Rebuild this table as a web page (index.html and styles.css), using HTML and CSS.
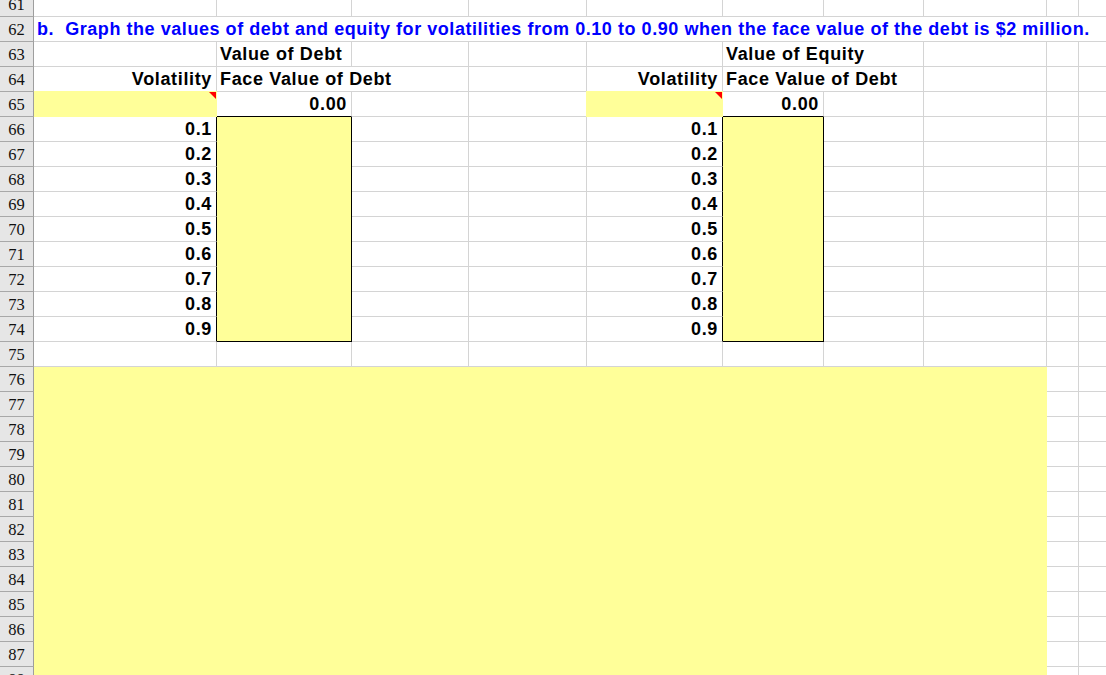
FILE: index.html
```html
<!DOCTYPE html>
<html>
<head>
<meta charset="utf-8">
<link rel="stylesheet" href="styles.css">
</head>
<body>
<div class="sheet">
  <!-- 61 -->
  <div class="rh">61</div><div class="c"></div><div class="c"></div><div class="c"></div><div class="c"></div><div class="c"></div><div class="c"></div><div class="c"></div><div class="c"></div><div class="c"></div><div class="c"></div>
  <!-- 62 -->
  <div class="rh">62</div><div class="c title span10">b.&nbsp; Graph the values of debt and equity for volatilities from 0.10 to 0.90 when the face value of the debt is $2 million.</div>
  <!-- 63 -->
  <div class="rh">63</div><div class="c"></div><div class="c">Value of Debt</div><div class="c"></div><div class="c"></div><div class="c"></div><div class="c span2">Value of Equity</div><div class="c"></div><div class="c"></div><div class="c"></div>
  <!-- 64 -->
  <div class="rh">64</div><div class="c r">Volatility</div><div class="c span2">Face Value of Debt</div><div class="c"></div><div class="c r">Volatility</div><div class="c span2">Face Value of Debt</div><div class="c"></div><div class="c"></div><div class="c"></div>
  <!-- 65 -->
  <div class="rh">65</div><div class="c fill note"></div><div class="c r boxtop">0.00</div><div class="c"></div><div class="c"></div><div class="c fill note fill-left"></div><div class="c r boxtop">0.00</div><div class="c"></div><div class="c"></div><div class="c"></div><div class="c"></div>
  <!-- 66 -->
  <div class="rh">66</div><div class="c r boxleft">0.1</div><div class="c box"></div><div class="c"></div><div class="c"></div><div class="c r boxleft">0.1</div><div class="c box"></div><div class="c"></div><div class="c"></div><div class="c"></div><div class="c"></div>
  <!-- 67 -->
  <div class="rh">67</div><div class="c r boxleft">0.2</div><div class="c"></div><div class="c"></div><div class="c r boxleft">0.2</div><div class="c"></div><div class="c"></div><div class="c"></div><div class="c"></div>
  <!-- 68 -->
  <div class="rh">68</div><div class="c r boxleft">0.3</div><div class="c"></div><div class="c"></div><div class="c r boxleft">0.3</div><div class="c"></div><div class="c"></div><div class="c"></div><div class="c"></div>
  <!-- 69 -->
  <div class="rh">69</div><div class="c r boxleft">0.4</div><div class="c"></div><div class="c"></div><div class="c r boxleft">0.4</div><div class="c"></div><div class="c"></div><div class="c"></div><div class="c"></div>
  <!-- 70 -->
  <div class="rh">70</div><div class="c r boxleft">0.5</div><div class="c"></div><div class="c"></div><div class="c r boxleft">0.5</div><div class="c"></div><div class="c"></div><div class="c"></div><div class="c"></div>
  <!-- 71 -->
  <div class="rh">71</div><div class="c r boxleft">0.6</div><div class="c"></div><div class="c"></div><div class="c r boxleft">0.6</div><div class="c"></div><div class="c"></div><div class="c"></div><div class="c"></div>
  <!-- 72 -->
  <div class="rh">72</div><div class="c r boxleft">0.7</div><div class="c"></div><div class="c"></div><div class="c r boxleft">0.7</div><div class="c"></div><div class="c"></div><div class="c"></div><div class="c"></div>
  <!-- 73 -->
  <div class="rh">73</div><div class="c r boxleft">0.8</div><div class="c"></div><div class="c"></div><div class="c r boxleft">0.8</div><div class="c"></div><div class="c"></div><div class="c"></div><div class="c"></div>
  <!-- 74 -->
  <div class="rh">74</div><div class="c r boxleft">0.9</div><div class="c"></div><div class="c"></div><div class="c r boxleft">0.9</div><div class="c"></div><div class="c"></div><div class="c"></div><div class="c"></div>
  <!-- 75 -->
  <div class="rh">75</div><div class="c"></div><div class="c"></div><div class="c"></div><div class="c"></div><div class="c"></div><div class="c"></div><div class="c"></div><div class="c"></div><div class="c"></div><div class="c"></div>
  <!-- 76 -->
  <div class="rh">76</div><div class="block"></div><div class="c"></div><div class="c"></div>
  <div class="rh">77</div><div class="c"></div><div class="c"></div>
  <div class="rh">78</div><div class="c"></div><div class="c"></div>
  <div class="rh">79</div><div class="c"></div><div class="c"></div>
  <div class="rh">80</div><div class="c"></div><div class="c"></div>
  <div class="rh">81</div><div class="c"></div><div class="c"></div>
  <div class="rh">82</div><div class="c"></div><div class="c"></div>
  <div class="rh">83</div><div class="c"></div><div class="c"></div>
  <div class="rh">84</div><div class="c"></div><div class="c"></div>
  <div class="rh">85</div><div class="c"></div><div class="c"></div>
  <div class="rh">86</div><div class="c"></div><div class="c"></div>
  <div class="rh">87</div><div class="c"></div><div class="c"></div>
  <div class="rh">88</div><div class="c"></div><div class="c"></div>
</div>
</body>
</html>
```

FILE: styles.css
```css
html, body {
  margin: 0;
  padding: 0;
  background: #ffffff;
  overflow: hidden;
}

.sheet {
  display: grid;
  grid-template-columns: 34px 183px 135px 117px 118px 136px 101px 100px 123px 32px 102px;
  grid-auto-rows: 25px;
  margin-top: -8px;
  width: 1181px;
}

.rh {
  box-sizing: border-box;
  background: #e6e6e6;
  border-right: 1px solid #9e9e9e;
  border-bottom: 1px solid #a8a8a8;
  font-family: "Liberation Serif", "Times New Roman", serif;
  font-size: 16.5px;
  line-height: 24px;
  padding-top: 1px;
  text-align: center;
  color: #111111;
}

.c {
  box-sizing: border-box;
  border-right: 1px solid #d4d4d4;
  border-bottom: 1px solid #d4d4d4;
  font-family: "Liberation Sans", Arial, sans-serif;
  font-weight: bold;
  font-size: 18px;
  letter-spacing: 0.65px;
  line-height: 24px;
  padding: 0 4px 0 3px;
  white-space: nowrap;
  overflow: visible;
  color: #000000;
  position: relative;
}

.r {
  text-align: right;
  padding-right: 4px;
}

.span2 {
  grid-column: span 2;
}

.span10 {
  grid-column: span 10;
}

.title {
  color: #0000ff;
  padding-left: 3px;
  letter-spacing: 0.55px;
}

.fill {
  background: #ffff99;
  border-color: transparent;
  margin-top: -1px;
}

.fill-left {
  margin-left: -1px;
}

.note::after {
  content: "";
  position: absolute;
  top: 1px;
  right: 0;
  width: 0;
  height: 0;
  border-top: 7px solid #ff0000;
  border-left: 7px solid transparent;
}

.boxtop {
  border-bottom-color: #000000;
}

.boxleft {
  border-right-color: #000000;
}

.box {
  grid-row: span 9;
  background: #ffff99;
  border-right-color: #000000;
  border-bottom-color: #000000;
}

.block {
  grid-column: span 8;
  grid-row: span 13;
  background: #ffff99;
  margin-top: -1px;
}
```
